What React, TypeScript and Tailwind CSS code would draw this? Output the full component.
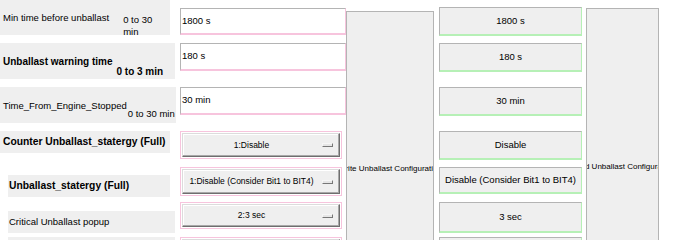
import React from "react";

const font = "font-['Liberation_Sans',Arial,sans-serif]";

const TextBox = ({ value, className }: { value: string; className: string }) => (
  <div
    className={`shrink-0 w-[166px] bg-white border border-[#b4b4b4] border-b-2 border-b-[#f7c4dd] border-r-[#f7c4dd] flex items-center pl-[1px] text-[9.5px] text-black ${className}`}
  >
    {value}
  </div>
);

const Combo = ({ value, className }: { value: string; className: string }) => (
  <div className={`shrink-0 w-[162px] border border-[#f7c4dd] p-[1px] flex ${className}`}>
    <div className="flex-1 min-w-0 flex items-center bg-[#efefef] border border-[#dcdcdc] border-r-[#6e6e6e] border-b-[#6e6e6e] shadow-[inset_-1px_-1px_0_#a8a8a8,inset_1px_1px_0_#ffffff]">
      <span className="flex-1 min-w-0 text-center text-[8.5px] text-black whitespace-nowrap pl-[2px]">{value}</span>
      <span className="shrink-0 w-[11px] h-[4px] mr-[6px] ml-[4px] bg-[#e6e6e6] border border-[#f6f6f6] border-r-[#777] border-b-[#777]" />
    </div>
  </div>
);

const Display = ({ value, className }: { value: string; className: string }) => (
  <div
    className={`shrink-0 w-[143px] bg-[#efefef] border border-[#b4b4b4] border-r-[#b6f0b6] border-b-2 border-b-[#b6f0b6] flex items-center justify-center text-[9.5px] text-black whitespace-nowrap ${className}`}
  >
    {value}
  </div>
);

const BigButton = ({ label, className }: { label: string; className: string }) => (
  <div
    className={`shrink-0 bg-[#efefef] border border-[#b4b4b4] overflow-hidden flex items-center justify-center text-[8px] text-black whitespace-nowrap ${className}`}
  >
    <span>{label}</span>
  </div>
);

export default function App() {
  return (
    <div className={`w-[686px] h-[240px] overflow-hidden bg-white flex items-start ${font}`}>
      {/* labels */}
      <div className="w-[180px] flex flex-col shrink-0">
        <div className="shrink-0 w-[170px] h-[35px] bg-[#efefef] flex text-[9.5px] text-black">
          <span className="pl-[3px] pt-[11px]">Min time before unballast</span>
          <span className="ml-[14px] pt-[14px] w-[40px] leading-[12px]">0 to 30 min</span>
        </div>
        <div className="shrink-0 mt-[8px] w-[175px] h-[36px] bg-[#efefef] flex text-[10px] font-bold text-black">
          <span className="pl-[3px] pt-[11px]">Unballast warning time</span>
          <span className="ml-[4px] pt-[21px]">0 to 3 min</span>
        </div>
        <div className="shrink-0 mt-[8px] w-[176px] h-[36px] bg-[#efefef] flex text-[9.5px] text-black">
          <span className="pl-[3px] pt-[12px]">Time_From_Engine_Stopped</span>
          <span className="ml-[1px] pt-[20px]">0 to 30 min</span>
        </div>
        <div className="shrink-0 mt-[8px] w-[170px] h-[22px] bg-[#efefef] flex items-center pl-[3px] text-[10.3px] font-bold text-black whitespace-nowrap">
          Counter Unballast_statergy (Full)
        </div>
        <div className="shrink-0 mt-[22px] ml-[8px] w-[162px] h-[22px] bg-[#efefef] flex items-center pl-[1px] text-[10.3px] font-bold text-black">
          Unballast_statergy (Full)
        </div>
        <div className="shrink-0 mt-[14px] ml-[8px] w-[167px] h-[22px] bg-[#efefef] flex items-center pl-[1px] text-[9.5px] text-black">
          Critical Unballast popup
        </div>
        <div className="shrink-0 mt-[4px] ml-[8px] w-[167px] h-[22px] bg-[#efefef]" />
      </div>

      {/* inputs */}
      <div className="w-[166px] flex flex-col shrink-0">
        <TextBox value="1800 s" className="mt-[8px] h-[27px]" />
        <TextBox value="180 s" className="mt-[8px] h-[28px]" />
        <TextBox value="30 min" className="mt-[16px] h-[28px]" />
        <Combo value="1:Disable" className="mt-[16px] h-[28px]" />
        <Combo value="1:Disable (Consider Bit1 to BIT4)" className="mt-[8px] h-[29px]" />
        <Combo value="2:3 sec" className="mt-[6px] h-[27px]" />
        <Combo value="" className="mt-[8px] h-[27px]" />
      </div>

      <BigButton label="Write Unballast Configuration" className="mt-[11px] w-[88px] h-[316px]" />

      {/* values read back */}
      <div className="ml-[5px] w-[143px] flex flex-col shrink-0">
        <Display value="1800 s" className="mt-[7px] h-[29px]" />
        <Display value="180 s" className="mt-[7px] h-[29px]" />
        <Display value="30 min" className="mt-[15px] h-[29px]" />
        <Display value="Disable" className="mt-[15px] h-[29px]" />
        <Display value="Disable (Consider Bit1 to BIT4)" className="mt-[7px] h-[27px]" />
        <Display value="3 sec" className="mt-[8px] h-[31px]" />
        <Display value="" className="mt-[4px] h-[29px]" />
      </div>

      <BigButton label="Read Unballast Configuration" className="ml-[4px] mt-[8px] w-[73px] h-[318px]" />
    </div>
  );
}
